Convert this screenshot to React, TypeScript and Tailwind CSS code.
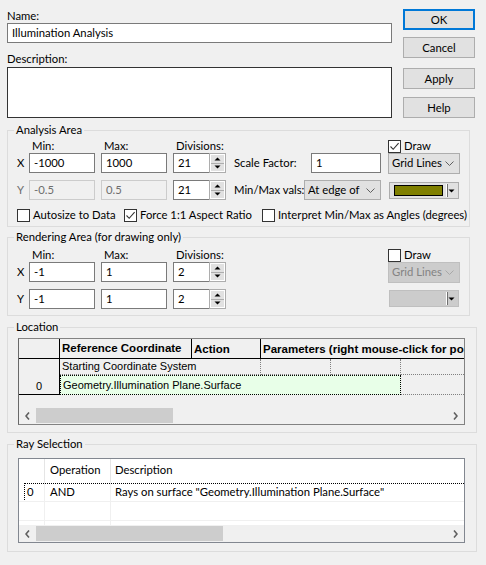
import React from "react";

const arial = "font-['Liberation_Sans',Arial,sans-serif]";

function Check({ checked }: { checked?: boolean }) {
  return (
    <span className="w-[13px] h-[13px] border border-[#333333] bg-white flex items-center justify-center shrink-0">
      {checked && (
        <svg width="11" height="11" viewBox="0 0 11 11">
          <path d="M1.5 5.5 L4.2 8.3 L9.6 2.2" fill="none" stroke="#333333" strokeWidth="1.1" />
        </svg>
      )}
    </span>
  );
}

function TextBox({ value, className = "", disabled }: { value: string; className?: string; disabled?: boolean }) {
  return (
    <div
      className={`h-[20px] border pl-[4px] leading-[18px] whitespace-nowrap overflow-hidden shrink-0 ${
        disabled ? "border-[#cccccc] bg-[#f0f0f0] text-[#6d6d6d]" : "border-[#7a7a7a] bg-white"
      } ${className}`}
    >
      {value}
    </div>
  );
}

function Spin({ value }: { value: string }) {
  return (
    <div className="flex h-[20px] w-[53px] shrink-0">
      <div className="w-[36px] h-full border border-r-0 border-[#7a7a7a] bg-white pl-[4px] leading-[18px]">{value}</div>
      <div className="w-[17px] h-full border border-[#adadad] bg-white flex flex-col p-[1px]">
        <div className="flex-1 flex items-center justify-center bg-[#e1e1e1] border-b border-[#adadad]">
          <svg width="7" height="4" viewBox="0 0 7 4">
            <path d="M0.5 3.5 L3.5 0.5 L6.5 3.5Z" fill="#000" />
          </svg>
        </div>
        <div className="flex-1 flex items-center justify-center bg-[#e1e1e1]">
          <svg width="7" height="4" viewBox="0 0 7 4">
            <path d="M0.5 0.5 L3.5 3.5 L6.5 0.5Z" fill="#000" />
          </svg>
        </div>
      </div>
    </div>
  );
}

function Select({ text, className = "", textClass = "", disabled }: { text: string; className?: string; textClass?: string; disabled?: boolean }) {
  return (
    <div
      className={`flex items-center border pl-[3px] pr-[5px] shrink-0 ${
        disabled ? "bg-[#cccccc] border-[#bfbfbf] text-[#838383]" : "bg-[#e1e1e1] border-[#adadad]"
      } ${className}`}
    >
      <span className={`overflow-hidden whitespace-nowrap ${textClass}`}>{text}</span>
      <span className="flex-1" />
      <svg width="9" height="5" viewBox="0 0 9 5">
        <path d="M0.5 0.5 L4.5 4.5 L8.5 0.5" fill="none" stroke={disabled ? "#a8a8a8" : "#606060"} strokeWidth="1" />
      </svg>
    </div>
  );
}

function ColorPick({ disabled }: { disabled?: boolean }) {
  return (
    <div
      className={`w-[70px] h-[17px] border flex items-center pl-[4px] pr-[3px] shrink-0 ${
        disabled ? "bg-[#cccccc] border-[#bfbfbf]" : "bg-[#e1e1e1] border-[#adadad]"
      }`}
    >
      {disabled ? <div className="w-[50px] h-[10px]" /> : <div className="w-[50px] h-[11px] bg-[#808000] border border-black" />}
      <div className="ml-[3px] w-[1px] h-[13px] bg-white" />
      <div className="w-[1px] h-[13px] bg-[#707070]" />
      <div className="flex-1 flex items-center justify-center">
        <svg width="7" height="4" viewBox="0 0 7 4">
          <path d="M0.5 0.5 L3.5 3.5 L6.5 0.5Z" fill="#000" />
        </svg>
      </div>
    </div>
  );
}

function Btn({ label, primary }: { label: string; primary?: boolean }) {
  return (
    <div
      className={`w-[72px] h-[21px] bg-[#e1e1e1] text-center ${
        primary ? "border-2 border-[#0078d7] leading-[17px]" : "border border-[#adadad] leading-[19px]"
      }`}
    >
      {label}
    </div>
  );
}

function HScroll({ thumbClass }: { thumbClass: string }) {
  return (
    <div className="h-[17px] flex bg-[#f0f0f0] shrink-0">
      <div className="w-[17px] flex items-center justify-center">
        <svg width="5" height="8" viewBox="0 0 5 8">
          <path d="M4 0.5 L1 4 L4 7.5" fill="none" stroke="#606060" strokeWidth="1.6" />
        </svg>
      </div>
      <div className="flex-1 flex items-center">
        <div className={`h-[15px] bg-[#cdcdcd] ${thumbClass}`} />
      </div>
      <div className="w-[17px] flex items-center justify-center">
        <svg width="5" height="8" viewBox="0 0 5 8">
          <path d="M1 0.5 L4 4 L1 7.5" fill="none" stroke="#606060" strokeWidth="1.6" />
        </svg>
      </div>
    </div>
  );
}

function LabelRow({ draw }: { draw: boolean }) {
  return (
    <div className="flex h-[14px] items-center leading-[14px]">
      <div className="w-[21px] shrink-0" />
      <div className="w-[66px] pl-[3px] shrink-0">Min:</div>
      <div className="ml-[6px] w-[66px] pl-[3px] shrink-0">Max:</div>
      <div className="ml-[6px] w-[53px] pl-[3px] shrink-0">Divisions:</div>
      <div className="ml-[162px] flex items-center gap-[3px]">
        <Check checked={draw} />
        <span>Draw</span>
      </div>
    </div>
  );
}

export default function App() {
  return (
    <div className="w-[486px] h-[565px] bg-[#f0f0f0] overflow-hidden font-['Lato','Noto_Sans',sans-serif] text-[11.3px] text-black">
      {/* top */}
      <div className="flex pl-[7px] pt-[9px]">
        <div className="w-[385px] flex flex-col">
          <div className="leading-[14px]">Name:</div>
          <div className="h-[20px] border border-[#7a7a7a] bg-white pl-[4px] leading-[18px]">Illumination Analysis</div>
          <div className="mt-[9px] leading-[14px]">Description:</div>
          <div className="mt-[1px] h-[51px] border border-[#333333] bg-white" />
        </div>
        <div className="ml-[11px] flex flex-col">
          <Btn label="OK" primary />
          <div className="mt-[7px]">
            <Btn label="Cancel" />
          </div>
          <div className="mt-[10px]">
            <Btn label="Apply" />
          </div>
          <div className="mt-[8px]">
            <Btn label="Help" />
          </div>
        </div>
      </div>

      {/* Analysis Area */}
      <fieldset className="mt-[5px] ml-[7px] w-[463px] border border-[#dcdcdc] pb-[4px]">
        <legend className="ml-[6px] px-[2px] leading-[14px]">Analysis Area</legend>
        <div className="mt-[2px]">
          <LabelRow draw={true} />
          <div className="flex items-start">
            <div className="w-[21px] pl-[9px] leading-[20px] shrink-0">X</div>
            <TextBox value="-1000" className="w-[66px]" />
            <TextBox value="1000" className="ml-[6px] w-[66px]" />
            <div className="ml-[6px]">
              <Spin value="21" />
            </div>
            <div className="ml-[8px] w-[77px] leading-[20px] whitespace-nowrap shrink-0">Scale Factor:</div>
            <TextBox value="1" className="w-[70px]" />
            <Select text="Grid Lines" className="ml-[7px] w-[72px] h-[21px]" />
          </div>
          <div className="mt-[6px] flex items-start">
            <div className="w-[21px] pl-[9px] leading-[20px] text-[#6d6d6d] shrink-0">Y</div>
            <TextBox value="-0.5" className="w-[66px]" disabled />
            <TextBox value="0.5" className="ml-[6px] w-[66px]" disabled />
            <div className="ml-[6px]">
              <Spin value="21" />
            </div>
            <div className="ml-[8px] w-[70px] leading-[20px] whitespace-nowrap overflow-hidden shrink-0">Min/Max vals:</div>
            <Select text="At edge of cell" textClass="w-[52px]" className="w-[77px] h-[20px]" />
            <div className="ml-[8px] mt-[2px]">
              <ColorPick />
            </div>
          </div>
          <div className="mt-[8px] flex h-[14px] items-center">
            <div className="ml-[9px] w-[107px] flex items-center gap-[3px] whitespace-nowrap shrink-0">
              <Check />
              <span>Autosize to Data</span>
            </div>
            <div className="w-[138px] flex items-center gap-[3px] whitespace-nowrap shrink-0">
              <Check checked />
              <span>Force 1:1 Aspect Ratio</span>
            </div>
            <div className="flex items-center gap-[3px] whitespace-nowrap">
              <Check />
              <span>Interpret Min/Max as Angles (degrees)</span>
            </div>
          </div>
        </div>
      </fieldset>

      {/* Rendering Area */}
      <fieldset className="mt-[3px] ml-[7px] w-[463px] border border-[#dcdcdc] pb-[6px]">
        <legend className="ml-[6px] px-[2px] leading-[14px]">Rendering Area (for drawing only)</legend>
        <div className="mt-[4px]">
          <LabelRow draw={false} />
          <div className="flex items-start">
            <div className="w-[21px] pl-[9px] leading-[20px] shrink-0">X</div>
            <TextBox value="-1" className="w-[66px]" />
            <TextBox value="1" className="ml-[6px] w-[66px]" />
            <div className="ml-[6px]">
              <Spin value="2" />
            </div>
            <Select text="Grid Lines" className="ml-[162px] w-[72px] h-[21px]" disabled />
          </div>
          <div className="mt-[6px] flex items-start">
            <div className="w-[21px] pl-[9px] leading-[20px] shrink-0">Y</div>
            <TextBox value="-1" className="w-[66px]" />
            <TextBox value="1" className="ml-[6px] w-[66px]" />
            <div className="ml-[6px]">
              <Spin value="2" />
            </div>
            <div className="ml-[163px] mt-[1px]">
              <ColorPick disabled />
            </div>
          </div>
        </div>
      </fieldset>

      {/* Location */}
      <fieldset className="mt-[4px] ml-[7px] w-[470px] border border-[#dcdcdc] pb-[7px]">
        <legend className="ml-[6px] px-[2px] leading-[14px]">Location</legend>
        <div
          className={`mt-[4px] ml-[10px] w-[447px] h-[87px] border border-[#828282] border-l-[#696969] bg-[#f0f0f0] flex flex-col overflow-hidden ${arial} text-[11px]`}
        >
          <div className="flex h-[20px] border-b border-black shrink-0">
            <div className="w-[41px] border-r border-black shrink-0" />
            <div className="w-[132px] border-r border-black pl-[2px] pt-[2px] font-bold text-[11.5px] leading-[15px] overflow-hidden shrink-0">
              Reference Coordinate System
            </div>
            <div className="w-[69px] border-r border-black pl-[2px] pt-[3px] font-bold text-[11.5px] leading-[15px] shrink-0">Action</div>
            <div className="flex-1 pl-[2px] pt-[3px] font-bold text-[11.5px] leading-[15px] whitespace-nowrap overflow-hidden">
              Parameters (right mouse-click for popup menu)
            </div>
          </div>
          <div className="flex shrink-0">
            <div className="w-[41px] h-[36px] border-r border-b border-black flex items-end justify-center pb-[1px] leading-[14px] shrink-0">
              0
            </div>
            <div className="flex-1 flex flex-col">
              <div className="flex h-[16px]">
                <div className="w-[201px] border-r border-b border-dotted border-[#808080] pl-[2px] leading-[15px] whitespace-nowrap shrink-0">
                  Starting Coordinate System
                </div>
                <div className="w-[70px] border-r border-b border-dotted border-[#808080] shrink-0" />
                <div className="w-[70px] border-r border-b border-dotted border-[#808080] shrink-0" />
                <div className="flex-1 border-b border-dotted border-[#808080]" />
              </div>
              <div className="flex h-[20px]">
                <div className="w-[341px] bg-[#e8ffe8] border border-dotted border-black pl-[2px] leading-[18px] whitespace-nowrap shrink-0">
                  Geometry.Illumination Plane.Surface
                </div>
                <div className="flex-1 border-b border-dotted border-[#808080]" />
              </div>
            </div>
          </div>
          <div className="flex-1" />
          <HScroll thumbClass="w-[137px]" />
        </div>
      </fieldset>

      {/* Ray Selection */}
      <fieldset className="mt-[4px] ml-[7px] w-[470px] border border-[#dcdcdc] pb-[8px]">
        <legend className="ml-[6px] px-[2px] leading-[14px]">Ray Selection</legend>
        <div className="mt-[7px] ml-[10px] w-[447px] h-[85px] border border-[#828790] bg-white flex flex-col overflow-hidden">
          <div className="flex h-[23px] shrink-0 leading-[22px]">
            <div className="w-[26px] border-r border-[#e5e5e5] shrink-0" />
            <div className="w-[66px] border-r border-[#e5e5e5] pl-[5px] shrink-0">Operation</div>
            <div className="flex-1 pl-[4px]">Description</div>
          </div>
          <div className="relative flex h-[20px] border-b border-[#f0f0f0] shrink-0 leading-[19px]">
            <div className="w-[26px] border-r border-[#f0f0f0] pl-[8px] shrink-0">0</div>
            <div className="w-[66px] border-r border-[#f0f0f0] pl-[5px] shrink-0">AND</div>
            <div className="flex-1 pl-[4px] whitespace-nowrap">Rays on surface "Geometry.Illumination Plane.Surface"</div>
            <div className="absolute left-[5px] right-0 top-[1px] bottom-[1px] border-t border-l border-dotted border-black" />
          </div>
          <div className="flex h-[19px] border-b border-[#f0f0f0] shrink-0">
            <div className="w-[26px] border-r border-[#f0f0f0] shrink-0" />
            <div className="w-[66px] border-r border-[#f0f0f0] shrink-0" />
            <div className="flex-1" />
          </div>
          <div className="flex flex-1">
            <div className="w-[26px] border-r border-[#f0f0f0] shrink-0" />
            <div className="w-[66px] border-r border-[#f0f0f0] shrink-0" />
            <div className="flex-1" />
          </div>
          <HScroll thumbClass="w-[187px]" />
        </div>
      </fieldset>
    </div>
  );
}
